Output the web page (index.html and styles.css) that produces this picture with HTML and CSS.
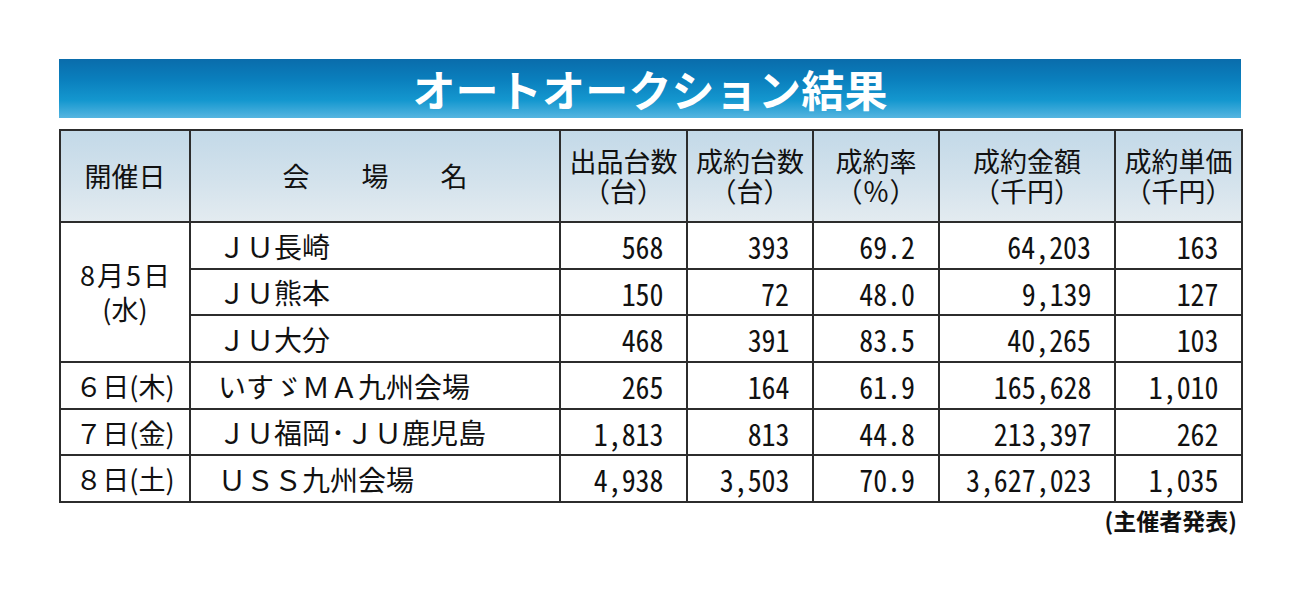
FILE: index.html
```html
<!DOCTYPE html>
<html lang="ja">
<head>
<meta charset="utf-8">
<title>オートオークション結果</title>
<link rel="stylesheet" href="styles.css">
</head>
<body>
<div class="page">
  <div class="banner"><h1 class="title">オートオークション結果</h1></div>
  <table class="results">
    <colgroup>
      <col class="c-date"><col class="c-venue"><col class="c-num"><col class="c-num2"><col class="c-num2"><col class="c-amt"><col class="c-num">
    </colgroup>
    <thead>
      <tr class="head-row">
        <th>開催日</th>
        <th><span class="spaced"><span>会</span><span>場</span><span>名</span></span></th>
        <th><span class="hl">出品台数</span><span class="hl">（台）</span></th>
        <th><span class="hl">成約台数</span><span class="hl">（台）</span></th>
        <th><span class="hl">成約率</span><span class="hl">（％）</span></th>
        <th><span class="hl">成約金額</span><span class="hl">（千円）</span></th>
        <th><span class="hl">成約単価</span><span class="hl">（千円）</span></th>
      </tr>
    </thead>
    <tbody>
      <tr class="r47">
        <td class="date multi" rowspan="3"><span class="d1"><span class="dg">8</span>月<span class="dg">5</span>日</span><span class="d2">(水)</span></td>
        <td class="venue">ＪＵ長崎</td>
        <td class="num"><span class="n">568</span></td><td class="num"><span class="n">393</span></td><td class="num"><span class="n">69.2</span></td><td class="num"><span class="n">64,203</span></td><td class="num"><span class="n">163</span></td>
      </tr>
      <tr class="r46">
        <td class="venue">ＪＵ熊本</td>
        <td class="num"><span class="n">150</span></td><td class="num"><span class="n">72</span></td><td class="num"><span class="n">48.0</span></td><td class="num"><span class="n">9,139</span></td><td class="num"><span class="n">127</span></td>
      </tr>
      <tr class="r47">
        <td class="venue">ＪＵ大分</td>
        <td class="num"><span class="n">468</span></td><td class="num"><span class="n">391</span></td><td class="num"><span class="n">83.5</span></td><td class="num"><span class="n">40,265</span></td><td class="num"><span class="n">103</span></td>
      </tr>
      <tr class="r47">
        <td class="date">６日(木)</td>
        <td class="venue">いすゞＭＡ九州会場</td>
        <td class="num"><span class="n">265</span></td><td class="num"><span class="n">164</span></td><td class="num"><span class="n">61.9</span></td><td class="num"><span class="n">165,628</span></td><td class="num"><span class="n">1,010</span></td>
      </tr>
      <tr class="r46">
        <td class="date">７日(金)</td>
        <td class="venue">ＪＵ福岡<span class="dot">･</span>ＪＵ鹿児島</td>
        <td class="num"><span class="n">1,813</span></td><td class="num"><span class="n">813</span></td><td class="num"><span class="n">44.8</span></td><td class="num"><span class="n">213,397</span></td><td class="num"><span class="n">262</span></td>
      </tr>
      <tr class="r47">
        <td class="date">８日(土)</td>
        <td class="venue">ＵＳＳ九州会場</td>
        <td class="num"><span class="n">4,938</span></td><td class="num"><span class="n">3,503</span></td><td class="num"><span class="n">70.9</span></td><td class="num"><span class="n">3,627,023</span></td><td class="num"><span class="n">1,035</span></td>
      </tr>
    </tbody>
  </table>
  <p class="source">(主催者発表)</p>
</div>
</body>
</html>
```

FILE: styles.css
```css
html, body {
  margin: 0;
  padding: 0;
  background: #ffffff;
}

body {
  font-family: "Noto Sans CJK JP", "Noto Sans", sans-serif;
  color: #111111;
}

.page {
  width: 1182px;
  padding: 59px 0 0 59px;
}

.banner {
  height: 59px;
  display: flex;
  align-items: center;
  justify-content: center;
  background: linear-gradient(to bottom, #0a6cab 0%, #0a7fbd 35%, #1497cf 70%, #55b5e0 100%);
  margin-bottom: 11px;
}

.title {
  margin: 0;
  font-size: 43px;
  font-weight: 700;
  line-height: 1;
  color: #ffffff;
  letter-spacing: 0.2px;
}

.results {
  width: 1182px;
  border-collapse: collapse;
  table-layout: fixed;
}

.c-date { width: 130px; }
.c-venue { width: 370px; }
.c-num { width: 127px; }
.c-num2 { width: 126px; }
.c-amt { width: 176px; }

.results th,
.results td {
  border: 2px solid #2c2c2c;
  padding: 0;
}

.head-row {
  height: 92px;
}

.results th {
  background: linear-gradient(to bottom, #c3d9e8 0%, #d3e2ec 55%, #e3ebf0 100%);
  font-weight: 400;
  font-size: 27px;
  line-height: 30px;
  text-align: center;
  vertical-align: middle;
  white-space: nowrap;
}

.hl {
  display: block;
  height: 30px;
  line-height: 30px;
}

.spaced {
  display: inline-flex;
  gap: 52px;
}

.r47 { height: 47px; }
.r46 { height: 46px; }

.results td {
  vertical-align: middle;
  line-height: 1;
}

.date {
  text-align: center;
  font-size: 27px;
  white-space: nowrap;
  padding-left: 2px;
}

.date.multi {
  line-height: 34px;
}

.d1, .d2 {
  display: block;
}

.d1 {
  letter-spacing: 1px;
}

.dg {
  padding: 0 1px;
}

.venue {
  font-size: 28px;
  padding-left: 27px !important;
  white-space: nowrap;
}

.dot {
  display: inline-block;
  width: 16px;
  text-align: center;
}

.num {
  text-align: right;
  padding-right: 23px !important;
  white-space: nowrap;
}

.n {
  display: inline-block;
  font-size: 31px;
  font-feature-settings: "hwid" 1;
  transform: scaleX(0.9);
  transform-origin: right center;
}

.source {
  margin: 4px 4px 0 0;
  text-align: right;
  font-size: 23px;
  font-weight: 700;
  line-height: 1.2;
}
```
